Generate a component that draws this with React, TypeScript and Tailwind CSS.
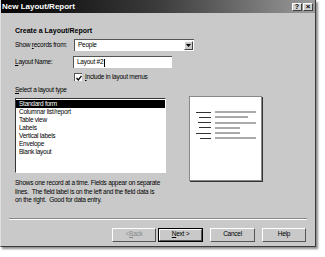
export default function App() {
  const items = ["Standard form", "Columnar list/report", "Table view", "Labels", "Vertical labels", "Envelope", "Blank layout"];
  const lines: [number, number][] = [
    [15, 41],
    [12, 33],
    [13, 41],
    [12, 25],
    [15, 25],
    [11, 41],
  ];
  return (
    <div className="w-[325px] h-[257px] bg-white overflow-hidden" style={{ fontFamily: '"Liberation Sans", Arial, sans-serif' }}>
      <div className="w-[316px] h-[247px] bg-[#c9c9c9] flex flex-col border-l border-l-[#e0e0e0] border-r border-b border-[#3a3a3a] shadow-[2px_2px_2px_rgba(0,0,0,0.45)]">
        {/* title bar */}
        <div className="h-[13px] flex items-center justify-between bg-gradient-to-r from-[#050505] via-[#3c3c3c] to-[#9c9c9c] pl-[1px] pr-[2px]">
          <span className="text-white font-bold text-[8px] leading-none">New Layout/Report</span>
          <div className="flex">
            <div className="w-[10px] h-[8px] bg-[#d0d0d0] border-t border-l border-t-white border-l-white border-r border-b border-r-[#404040] border-b-[#404040] flex items-center justify-center text-[7px] font-bold leading-none text-black">?</div>
            <div className="ml-[1px] w-[10px] h-[8px] bg-[#d0d0d0] border-t border-l border-t-white border-l-white border-r border-b border-r-[#404040] border-b-[#404040] flex items-center justify-center text-[8px] font-bold leading-none text-black">×</div>
          </div>
        </div>
        {/* body */}
        <div className="flex-1 flex flex-col pl-[14px] pr-[8px] text-[6.5px] tracking-[-0.25px] leading-none text-black">
          <div className="mt-[14px] font-bold text-[7px] tracking-normal">Create a Layout/Report</div>
          <div className="mt-[5px] flex items-center">
            <span className="w-[59px] whitespace-nowrap">Show <u>r</u>ecords from:</span>
            <div className="w-[120px] h-[12px] bg-white border-t border-l border-[#555] flex items-center justify-between">
              <span className="pl-[3px]">People</span>
              <div className="w-[9px] h-[9px] mr-[1px] bg-[#c9c9c9] border-t border-l border-white border-r border-b border-r-[#444] border-b-[#444] flex items-center justify-center">
                <svg width="5" height="3" viewBox="0 0 5 3"><path d="M0 0H5L2.5 3Z" fill="#000" /></svg>
              </div>
            </div>
          </div>
          <div className="mt-[5px] flex items-center">
            <span className="w-[58px] whitespace-nowrap"><u>L</u>ayout Name:</span>
            <div className="w-[99px] h-[12px] bg-white border-t border-l border-[#555] flex items-center">
              <span className="pl-[3px]">Layout #2</span>
              <span className="w-[1px] h-[8px] bg-black ml-[1px]" />
            </div>
          </div>
          <div className="mt-[5px] flex items-center pl-[59px]">
            <div className="w-[8px] h-[8px] bg-white border-t border-l border-[#555] flex items-center justify-center">
              <svg width="6" height="6" viewBox="0 0 6 6"><path d="M0.5 3L2.3 5L5.5 0.8" stroke="#000" strokeWidth="1.3" fill="none" /></svg>
            </div>
            <span className="ml-[3px]"><u>I</u>nclude in layout menus</span>
          </div>
          <div className="mt-[6px] h-[7px] flex items-center"><u>S</u>elect a layout type</div>
          <div className="mt-[4px] flex h-[75px] items-start">
            <div className="w-[151px] h-[75px] bg-white border-t border-l border-[#333] border-r border-b border-r-white border-b-white flex flex-col pt-[1px]">
              {items.map((t, i) => (
                <div key={t} className={`h-[8px] flex items-center pl-[3px] ${i === 0 ? "bg-black text-white" : ""}`}>{t}</div>
              ))}
            </div>
            <div className="ml-[23px] -mt-[2px] w-[73px] h-[85px] shrink-0 bg-white border border-[#888] shadow-[1px_1px_0_#333] flex flex-col pt-[14px] pl-[6px] gap-[3.3px]">
              {lines.map(([a, b], i) => (
                <div key={i} className="flex items-center h-[2px]">
                  <div className="w-[15px] flex justify-end"><div className="h-[1px] bg-[#333]" style={{ width: a }} /></div>
                  <div className="ml-[4px] h-[2px] bg-[#aaa]" style={{ width: b }} />
                </div>
              ))}
            </div>
          </div>
          <div className="mt-[6px] leading-[8.5px] whitespace-nowrap">
            Shows one record at a time. Fields appear on separate<br />
            lines.&nbsp; The field label is on the left and the field data is<br />
            on the right.&nbsp; Good for data entry.
          </div>
          <div className="mt-[13px] -ml-[6px] h-[2px] border-t border-[#888] border-b border-b-white" />
          <div className="mt-[8px] flex justify-end pr-[1px]">
            <div className="w-[44px] h-[14px] bg-[#c9c9c9] border-t border-l border-white border-r border-b border-r-[#555] border-b-[#555] flex items-center justify-center text-[#8a8a8a]">&lt; <u>B</u>ack</div>
            <div className="ml-[2px] w-[45px] h-[14px] border border-black flex items-center justify-center">
              <div className="w-[43px] h-[12px] border-t border-l border-white border-r border-b border-r-[#555] border-b-[#555] flex items-center justify-center"><u>N</u>ext &gt;</div>
            </div>
            <div className="ml-[7px] w-[45px] h-[14px] border-t border-l border-white border-r border-b border-r-[#555] border-b-[#555] flex items-center justify-center">Cancel</div>
            <div className="ml-[7px] w-[44px] h-[14px] border-t border-l border-white border-r border-b border-r-[#555] border-b-[#555] flex items-center justify-center">Help</div>
          </div>
        </div>
      </div>
    </div>
  );
}
